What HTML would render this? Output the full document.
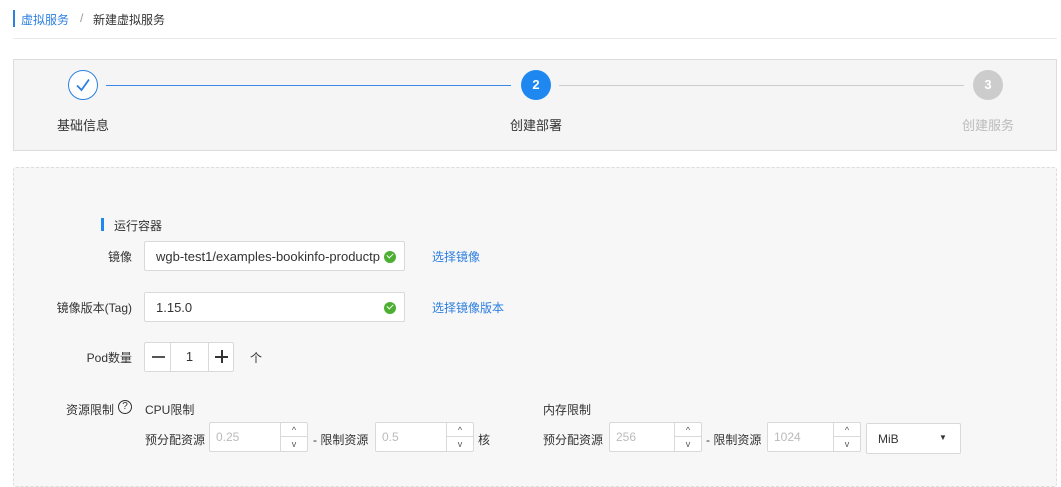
<!DOCTYPE html>
<html><head><meta charset="utf-8"><style>
*{box-sizing:border-box;margin:0;padding:0}
body{width:1061px;height:467px;overflow:hidden;background:#fff;font-family:"Liberation Sans","Noto Sans CJK SC",sans-serif;font-size:12px;color:#333;position:relative}
.a{position:absolute}
.inp{position:absolute;border:1px solid #d9d9d9;background:#fff;border-radius:2px}
.num{position:absolute;border:1px solid #d9d9d9;background:#fff;border-radius:2px;color:#bbb;padding-left:6px;line-height:28px}
.num .sp{position:absolute;right:0;top:0;width:27px;height:100%;border-left:1px solid #d9d9d9}
.num .sp div{height:50%;text-align:center;font-size:9px;color:#555;line-height:14px}
.num .sp div:first-child{border-bottom:1px solid #d9d9d9}
.ok{position:absolute;right:8px;top:9px;width:12px;height:12px;border-radius:50%;background:#4caf31}
.ok:after{content:"";position:absolute;left:3px;top:2px;width:5px;height:3px;border-left:1.5px solid #fff;border-bottom:1.5px solid #fff;transform:rotate(-45deg)}
.lbl{position:absolute;text-align:right;font-size:12px;color:#333}
.link{position:absolute;color:#2d7fe0}
</style></head><body>
<div class="a" style="left:13px;top:10px;width:2px;height:17px;background:#2d7fe0"></div>
<div class="a" style="left:21px;top:11px;color:#2d7fe0">虚拟服务</div>
<div class="a" style="left:80px;top:11px;color:#999">/</div>
<div class="a" style="left:93px;top:11px;color:#333">新建虚拟服务</div>
<div class="a" style="left:13px;top:38px;width:1044px;height:1px;background:#eaeaea"></div>

<div class="a" style="left:13px;top:59px;width:1044px;height:92px;background:#f5f5f5;border:1px solid #dcdcdc"></div>
<div class="a" style="left:68px;top:70px;width:30px;height:30px;border-radius:50%;border:1px solid #2d7fe0;background:#fff"></div>
<svg class="a" style="left:68px;top:70px" width="30" height="30"><path d="M9 15.5 L13.5 20 L21 9.5" fill="none" stroke="#2d7fe0" stroke-width="1.8"/></svg>
<div class="a" style="left:106px;top:85px;width:405px;height:1px;background:#3a88e8"></div>
<div class="a" style="left:521px;top:70px;width:30px;height:30px;border-radius:50%;background:#1e88f0;color:#fff;font-weight:bold;font-size:13px;text-align:center;line-height:30px">2</div>
<div class="a" style="left:559px;top:85px;width:405px;height:1px;background:#ccc"></div>
<div class="a" style="left:973px;top:70px;width:30px;height:30px;border-radius:50%;background:#ccc;color:#fff;font-weight:bold;font-size:13px;text-align:center;line-height:30px">3</div>
<div class="a" style="left:57px;top:115px;font-size:13px">基础信息</div>
<div class="a" style="left:510px;top:115px;font-size:13px">创建部署</div>
<div class="a" style="left:962px;top:115px;font-size:13px;color:#bbb">创建服务</div>

<div class="a" style="left:13px;top:167px;width:1044px;height:320px;background:#f7f7f7;border:1px dashed #dcdcdc;border-radius:3px"></div>
<div class="a" style="left:101px;top:218px;width:3px;height:13px;background:#1e88f0"></div>
<div class="a" style="left:114px;top:217px">运行容器</div>

<div class="lbl" style="left:40px;width:92px;top:248px">镜像</div>
<div class="inp" style="left:144px;top:241px;width:261px;height:30px"><div style="padding:7px 11px;font-size:13px;white-space:nowrap;overflow:hidden;width:235px">wgb-test1/examples-bookinfo-productpage</div><div class="ok"></div></div>
<div class="link" style="left:432px;top:248px">选择镜像</div>

<div class="lbl" style="left:40px;width:92px;top:299px">镜像版本(Tag)</div>
<div class="inp" style="left:144px;top:292px;width:261px;height:30px"><div style="padding:7px 11px;font-size:13px">1.15.0</div><div class="ok"></div></div>
<div class="link" style="left:432px;top:299px">选择镜像版本</div>

<div class="lbl" style="left:40px;width:92px;top:349px">Pod数量</div>
<div class="inp" style="left:144px;top:342px;width:90px;height:30px">
<div class="a" style="left:25px;top:0;width:39px;height:28px;border-left:1px solid #d9d9d9;border-right:1px solid #d9d9d9;text-align:center;line-height:28px;font-size:13px">1</div>
<div class="a" style="left:7px;top:13px;width:13px;height:1.5px;background:#555"></div>
<div class="a" style="left:70px;top:13px;width:13px;height:1.5px;background:#333"></div>
<div class="a" style="left:76px;top:7px;width:1.5px;height:13px;background:#333"></div>
</div>
<div class="a" style="left:250px;top:349px">个</div>

<div class="a" style="left:66px;top:401px">资源限制</div>
<div class="a" style="left:118px;top:400px;width:14px;height:14px;border:1px solid #333;border-radius:50%;font-size:10px;text-align:center;line-height:12px">?</div>
<div class="a" style="left:145px;top:401px">CPU限制</div>
<div class="a" style="left:543px;top:401px">内存限制</div>

<div class="a" style="left:145px;top:431px">预分配资源</div>
<div class="num" style="left:209px;top:422px;width:99px;height:30px">0.25<div class="sp"><div>^</div><div>v</div></div></div>
<div class="a" style="left:313px;top:431px">- 限制资源</div>
<div class="num" style="left:375px;top:422px;width:99px;height:30px">0.5<div class="sp"><div>^</div><div>v</div></div></div>
<div class="a" style="left:478px;top:431px">核</div>

<div class="a" style="left:543px;top:431px">预分配资源</div>
<div class="num" style="left:609px;top:422px;width:93px;height:30px">256<div class="sp"><div>^</div><div>v</div></div></div>
<div class="a" style="left:706px;top:431px">- 限制资源</div>
<div class="num" style="left:767px;top:422px;width:94px;height:30px">1024<div class="sp"><div>^</div><div>v</div></div></div>
<div class="inp" style="left:866px;top:423px;width:95px;height:31px"><span class="a" style="left:11px;top:8px;font-size:12px">MiB</span><span class="a" style="left:72px;top:9px;font-size:8px">▼</span></div>
</body></html>
